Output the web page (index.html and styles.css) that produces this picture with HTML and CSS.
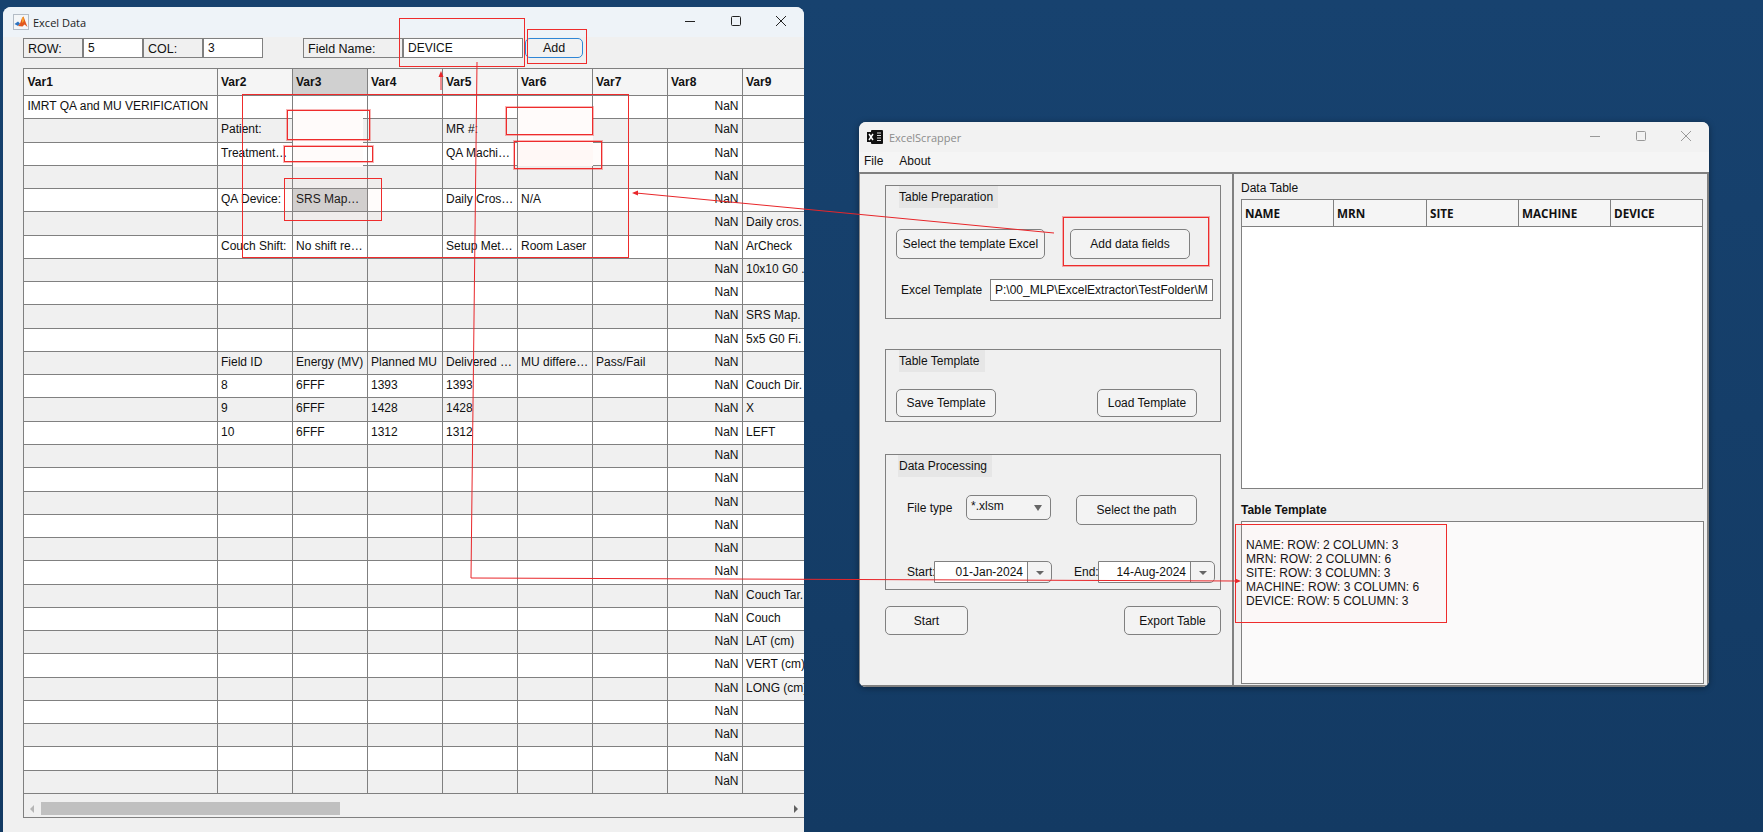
FILE: index.html
```html
<!DOCTYPE html>
<html lang="en">
<head>
<meta charset="UTF-8">
<meta name="viewport" content="width=device-width, initial-scale=1.0">
<title>ExcelScrapper</title>
<link rel="stylesheet" href="styles.css">
</head>
<body>

  <div class="window data-window">
    <div class="titlebar">
      <svg class="app-icon" width="16" height="16" viewBox="0 0 16 16">
        <rect x="0.5" y="0.5" width="15" height="15" fill="#f4f6f8" stroke="#b4bcc6"/>
        <polygon points="1.5,10 5,7.5 7,9.5 5,12" fill="#2f74c0"/>
        <polygon points="5,12 7,9.5 9,4 10.5,2.5 14.5,13 11.5,10.5 9.5,12.5" fill="#e2571e"/>
        <polygon points="9,4 10.5,2.5 11,7 9,9" fill="#f7a12a"/>
      </svg>
      <span class="title-text">Excel Data</span>
      <div class="win-controls">
        <svg width="16" height="16" viewBox="0 0 16 16"><path d="M3 8.5h10" stroke="#222" fill="none"/></svg>
        <svg width="16" height="16" viewBox="0 0 16 16"><rect x="3.5" y="3.5" width="9" height="9" rx="1" stroke="#222" fill="none"/></svg>
        <svg width="16" height="16" viewBox="0 0 16 16"><path d="M3 3l10 10M13 3L3 13" stroke="#222" fill="none"/></svg>
      </div>
    </div>

    <div class="field-bar">
      <div class="field-cell w60">ROW:</div>
      <div class="field-cell w60 value">5</div>
      <div class="field-cell w60">COL:</div>
      <div class="field-cell w60 value">3</div>
      <div class="field-cell w100 push">Field Name:</div>
      <div class="field-cell w120 value">DEVICE</div>
      <button class="add-btn">Add</button>
    </div>

    <div class="sheet">
      <div class="sheet-row head"><div>Var1</div><div>Var2</div><div class="picked">Var3</div><div>Var4</div><div>Var5</div><div>Var6</div><div>Var7</div><div>Var8</div><div>Var9</div></div>
      <div class="sheet-row"><div>IMRT QA and MU VERIFICATION</div><div></div><div></div><div></div><div></div><div></div><div></div><div class="num">NaN</div><div></div></div>
      <div class="sheet-row"><div></div><div>Patient:</div><div></div><div></div><div>MR #:</div><div></div><div></div><div class="num">NaN</div><div></div></div>
      <div class="sheet-row"><div></div><div>Treatment…</div><div></div><div></div><div>QA Machi…</div><div></div><div></div><div class="num">NaN</div><div></div></div>
      <div class="sheet-row"><div></div><div></div><div></div><div></div><div></div><div></div><div></div><div class="num">NaN</div><div></div></div>
      <div class="sheet-row"><div></div><div>QA Device:</div><div class="picked">SRS Map…</div><div></div><div>Daily Cros…</div><div>N/A</div><div></div><div class="num">NaN</div><div></div></div>
      <div class="sheet-row"><div></div><div></div><div></div><div></div><div></div><div></div><div></div><div class="num">NaN</div><div>Daily cros.</div></div>
      <div class="sheet-row"><div></div><div>Couch Shift:</div><div>No shift re…</div><div></div><div>Setup Met…</div><div>Room Laser</div><div></div><div class="num">NaN</div><div>ArCheck</div></div>
      <div class="sheet-row"><div></div><div></div><div></div><div></div><div></div><div></div><div></div><div class="num">NaN</div><div>10x10 G0 .</div></div>
      <div class="sheet-row"><div></div><div></div><div></div><div></div><div></div><div></div><div></div><div class="num">NaN</div><div></div></div>
      <div class="sheet-row"><div></div><div></div><div></div><div></div><div></div><div></div><div></div><div class="num">NaN</div><div>SRS Map.</div></div>
      <div class="sheet-row"><div></div><div></div><div></div><div></div><div></div><div></div><div></div><div class="num">NaN</div><div>5x5 G0 Fi.</div></div>
      <div class="sheet-row"><div></div><div>Field ID</div><div>Energy (MV)</div><div>Planned MU</div><div>Delivered …</div><div>MU differe…</div><div>Pass/Fail</div><div class="num">NaN</div><div></div></div>
      <div class="sheet-row"><div></div><div>8</div><div>6FFF</div><div>1393</div><div>1393</div><div></div><div></div><div class="num">NaN</div><div>Couch Dir.</div></div>
      <div class="sheet-row"><div></div><div>9</div><div>6FFF</div><div>1428</div><div>1428</div><div></div><div></div><div class="num">NaN</div><div>X</div></div>
      <div class="sheet-row"><div></div><div>10</div><div>6FFF</div><div>1312</div><div>1312</div><div></div><div></div><div class="num">NaN</div><div>LEFT</div></div>
      <div class="sheet-row"><div></div><div></div><div></div><div></div><div></div><div></div><div></div><div class="num">NaN</div><div></div></div>
      <div class="sheet-row"><div></div><div></div><div></div><div></div><div></div><div></div><div></div><div class="num">NaN</div><div></div></div>
      <div class="sheet-row"><div></div><div></div><div></div><div></div><div></div><div></div><div></div><div class="num">NaN</div><div></div></div>
      <div class="sheet-row"><div></div><div></div><div></div><div></div><div></div><div></div><div></div><div class="num">NaN</div><div></div></div>
      <div class="sheet-row"><div></div><div></div><div></div><div></div><div></div><div></div><div></div><div class="num">NaN</div><div></div></div>
      <div class="sheet-row"><div></div><div></div><div></div><div></div><div></div><div></div><div></div><div class="num">NaN</div><div></div></div>
      <div class="sheet-row"><div></div><div></div><div></div><div></div><div></div><div></div><div></div><div class="num">NaN</div><div>Couch Tar.</div></div>
      <div class="sheet-row"><div></div><div></div><div></div><div></div><div></div><div></div><div></div><div class="num">NaN</div><div>Couch</div></div>
      <div class="sheet-row"><div></div><div></div><div></div><div></div><div></div><div></div><div></div><div class="num">NaN</div><div>LAT (cm)</div></div>
      <div class="sheet-row"><div></div><div></div><div></div><div></div><div></div><div></div><div></div><div class="num">NaN</div><div>VERT (cm)</div></div>
      <div class="sheet-row"><div></div><div></div><div></div><div></div><div></div><div></div><div></div><div class="num">NaN</div><div>LONG (cm)</div></div>
      <div class="sheet-row"><div></div><div></div><div></div><div></div><div></div><div></div><div></div><div class="num">NaN</div><div></div></div>
      <div class="sheet-row"><div></div><div></div><div></div><div></div><div></div><div></div><div></div><div class="num">NaN</div><div></div></div>
      <div class="sheet-row"><div></div><div></div><div></div><div></div><div></div><div></div><div></div><div class="num">NaN</div><div></div></div>
      <div class="sheet-row"><div></div><div></div><div></div><div></div><div></div><div></div><div></div><div class="num">NaN</div><div></div></div>
      <div class="sheet-scroll">
        <span class="arrow-left"></span>
        <span class="thumb"></span>
        <span class="arrow-right"></span>
      </div>
    </div>
  </div>

  <div class="window scrapper-window">
    <div class="titlebar light">
      <svg class="app-icon" width="16" height="16" viewBox="0 0 16 16">
        <rect x="4" y="1" width="12" height="14" rx="1" fill="#111"/>
        <path d="M10 4h4M10 6.5h4M10 9h4M10 11.5h4" stroke="#ddd" fill="none"/>
        <rect x="0" y="3" width="9" height="10" fill="#111"/>
        <path d="M2 5l4 6M6 5l-4 6" stroke="#fff" stroke-width="1.5" fill="none"/>
      </svg>
      <span class="title-text grey">ExcelScrapper</span>
      <div class="win-controls pale">
        <svg width="16" height="16" viewBox="0 0 16 16"><path d="M3 8.5h10" stroke="#999" fill="none"/></svg>
        <svg width="16" height="16" viewBox="0 0 16 16"><rect x="3.5" y="3.5" width="9" height="9" rx="1" stroke="#999" fill="none"/></svg>
        <svg width="16" height="16" viewBox="0 0 16 16"><path d="M3 3l10 10M13 3L3 13" stroke="#999" fill="none"/></svg>
      </div>
    </div>
    <div class="menubar"><span>File</span><span>About</span></div>

    <div class="panes">
      <div class="left-pane">
        <div class="group group-prep">
          <div class="group-title">Table Preparation</div>
          <div class="group-line top21">
            <button class="btn btn-template">Select the template Excel</button>
            <button class="btn btn-fields">Add data fields</button>
          </div>
          <div class="group-line top20">
            <label class="tpl-label">Excel Template</label>
            <div class="tpl-path">P:\00_MLP\ExcelExtractor\TestFolder\M</div>
          </div>
        </div>

        <div class="group group-tpl">
          <div class="group-title">Table Template</div>
          <div class="group-line top17 spread">
            <button class="btn btn-save">Save Template</button>
            <button class="btn btn-save">Load Template</button>
          </div>
        </div>

        <div class="group group-proc">
          <div class="group-title">Data Processing</div>
          <div class="group-line top18">
            <label class="type-label">File type</label>
            <div class="dropdown">*.xlsm<span class="caret"></span></div>
            <button class="btn btn-path">Select the path</button>
          </div>
          <div class="group-line date-line">
            <label class="start-label">Start:</label>
            <div class="date-box w118"><span class="date-text">01-Jan-2024</span><span class="date-drop"><i class="caret small"></i></span></div>
            <label class="end-label">End:</label>
            <div class="date-box w117"><span class="date-text">14-Aug-2024</span><span class="date-drop"><i class="caret small"></i></span></div>
          </div>
        </div>

        <div class="action-line">
          <button class="btn btn-start">Start</button>
          <button class="btn btn-export">Export Table</button>
        </div>
      </div>

      <div class="right-pane">
        <div class="pane-label">Data Table</div>
        <div class="data-table">
          <div class="data-head">
            <div>NAME</div><div>MRN</div><div>SITE</div><div>MACHINE</div><div>DEVICE</div>
          </div>
        </div>
        <div class="pane-label bold">Table Template</div>
        <div class="template-box">NAME: ROW: 2 COLUMN: 3
MRN: ROW: 2 COLUMN: 6
SITE: ROW: 3 COLUMN: 3
MACHINE: ROW: 3 COLUMN: 6
DEVICE: ROW: 5 COLUMN: 3</div>
      </div>
    </div>
  </div>

  <!-- red markup drawn over the two windows -->
  <div class="mask mask-a"></div>
  <div class="mask mask-b"></div>
  <div class="note note-device"></div>
  <div class="note note-add"></div>
  <div class="note note-big"></div>
  <div class="note note-patient soft"></div>
  <div class="note note-treat soft"></div>
  <div class="note note-srs"></div>
  <div class="note note-mr soft"></div>
  <div class="note note-qa soft"></div>
  <div class="note note-fields soft"></div>
  <div class="note note-template"></div>
  <svg class="arrows" width="1763" height="832" viewBox="0 0 1763 832">
    <path d="M1054 233L636 193" stroke="#e8262a" fill="none"/>
    <polygon points="632,193 638,190.5 638,195.5" fill="#e8262a"/>
    <path d="M441 90V75" stroke="#e8262a" fill="none"/>
    <polygon points="441,71 438.5,77 443.5,77" fill="#e8262a"/>
    <path d="M477 62L471 578L1236 581" stroke="#e8262a" fill="none"/>
    <polygon points="1241,581 1235,578.5 1235,583.5" fill="#e8262a"/>
  </svg>

</body>
</html>
```

FILE: styles.css
```css
* {
  box-sizing: border-box;
}
body {
  margin: 0;
  width: 1763px;
  height: 832px;
  position: relative;
  overflow: hidden;
  background: linear-gradient(#17426f, #133a63);
  font-family: "Liberation Sans", Arial, sans-serif;
  font-size: 12px;
  color: #111;
}
button {
  font-family: inherit;
  font-size: 12px;
  color: #111;
  padding: 0;
}

/* windows */
.window {
  position: absolute;
  background: #f0f0f0;
  overflow: hidden;
  display: flex;
  flex-direction: column;
}
.data-window {
  left: 3px;
  top: 7px;
  width: 801px;
  height: 825px;
  border-radius: 8px 8px 0 0;
}
.scrapper-window {
  left: 859px;
  top: 122px;
  width: 850px;
  height: 565px;
  border-radius: 7px;
  box-shadow: 0 1px 6px rgba(0, 0, 0, 0.4);
}
.titlebar {
  height: 30px;
  flex: none;
  display: flex;
  align-items: center;
  background: #eef3f8;
  padding-left: 10px;
}
.titlebar.light {
  background: #f2f2f2;
  padding-left: 8px;
}
.app-icon {
  flex: none;
}
.title-text {
  font-family: "Open Sans", sans-serif;
  font-size: 11px;
  margin-left: 4px;
  color: #222;
}
.title-text.grey {
  color: #8c8c8c;
  margin-left: 6px;
}
.win-controls {
  margin-left: auto;
  display: flex;
  gap: 29.5px;
  padding-right: 15px;
  margin-top: -2px;
}

/* top fields */
.field-bar {
  display: flex;
  height: 20px;
  margin: 1px 0 0 20px;
}
.field-cell {
  border: 1px solid #808080;
  background: #f0f0f0;
  padding: 3px 4px 0;
  line-height: 14px;
  font-size: 12.5px;
}
.field-cell.value {
  background: #fff;
  padding-top: 2px;
  font-size: 12px;
}
.w60 {
  width: 60px;
}
.w100 {
  width: 100px;
}
.w120 {
  width: 120px;
}
.push {
  margin-left: 40px;
}
.add-btn {
  width: 58px;
  margin-left: 2px;
  border: 1px solid #2f86d6;
  border-radius: 5px;
  background: #f2f2f2;
  font-size: 12.5px;
}

/* sheet */
.sheet {
  margin: 10px 0 0 20px;
  width: 810px;
  height: 750px;
  border: 1px solid #808080;
  border-right: 0;
  position: relative;
  overflow: hidden;
  background: #f0f0f0;
}
.sheet-row {
  display: grid;
  grid-template-columns: 193.5px repeat(8, 75px);
  height: 23.27px;
  background: #fff;
}
.sheet-row:nth-child(odd) {
  background: #f0f0f0;
}
.sheet-row.head {
  height: 27px;
  background: #f5f5f5;
  font-weight: bold;
}
.sheet-row > div {
  border-right: 1px solid #808080;
  border-bottom: 1px solid #808080;
  padding: 0 3px 0 3.5px;
  line-height: 21px;
  white-space: nowrap;
  overflow: hidden;
}
.sheet-row.head > div {
  line-height: 26px;
}
.sheet-row > div.num {
  text-align: right;
}
.sheet-row > div.picked {
  background: #d0d0d0;
}
.sheet-scroll {
  position: absolute;
  left: 0;
  right: 0;
  bottom: 0;
  height: 17px;
  background: #f0f0f0;
}
.thumb {
  position: absolute;
  left: 17px;
  top: 2px;
  width: 299px;
  height: 13px;
  background: #c0c0c0;
}
.arrow-left,
.arrow-right {
  position: absolute;
  top: 5px;
  width: 0;
  height: 0;
  border-top: 4px solid transparent;
  border-bottom: 4px solid transparent;
}
.arrow-left {
  left: 6px;
  border-right: 4px solid #b5b5b5;
}
.arrow-right {
  left: 770px;
  border-left: 4px solid #606060;
}

/* scrapper window */
.menubar {
  height: 22px;
  flex: none;
  background: #f5f5f5;
  border-bottom: 2px solid #808080;
  display: flex;
  gap: 16px;
  padding: 0 0 0 5px;
  line-height: 19px;
}
.panes {
  flex: 1;
  display: flex;
  min-height: 0;
  border-left: 1px solid #8a8a8a;
  border-bottom: 2px solid #808080;
}
.left-pane {
  width: 374px;
  flex: none;
  padding: 11px 0 0 25px;
  border-right: 2px solid #808080;
}
.group {
  width: 336px;
  border: 1px solid #808080;
  padding-left: 10px;
}
.group-prep {
  height: 134px;
}
.group-tpl {
  height: 73px;
  margin-top: 30px;
}
.group-proc {
  height: 136px;
  margin-top: 32px;
  padding-left: 0;
}
.group-title {
  display: inline-block;
  vertical-align: top;
  background: #e6e6e6;
  height: 22px;
  line-height: 22px;
  margin-left: 3px;
  padding: 0 5px 0 0;
}
.group-proc .group-title {
  margin-left: 12px;
  padding: 0 5px 0 1px;
}
.group-line {
  display: flex;
  align-items: flex-start;
}
.top21 {
  margin-top: 21px;
}
.top20 {
  margin-top: 20px;
}
.top18 {
  margin-top: 18px;
}
.top17 {
  margin-top: 17px;
}
.spread {
  width: 301px;
  justify-content: space-between;
}
.btn {
  height: 30px;
  border: 1px solid #808080;
  border-radius: 5px;
  background: #f3f3f3;
}
.btn-template {
  width: 149px;
}
.btn-fields {
  width: 120px;
  margin-left: 25px;
}
.tpl-label {
  margin-left: 5px;
  width: 89px;
  line-height: 22px;
}
.tpl-path {
  width: 223px;
  height: 22px;
  line-height: 20px;
  border: 1px solid #808080;
  background: #fff;
  padding-left: 4px;
  white-space: nowrap;
  overflow: hidden;
}
.btn-save {
  width: 100px;
  height: 28px;
}
.type-label {
  margin-left: 21px;
  width: 59px;
  line-height: 26px;
}
.dropdown {
  width: 85px;
  height: 25px;
  border: 1px solid #808080;
  border-radius: 5px;
  background: #f3f3f3;
  padding-left: 4px;
  line-height: 21px;
  position: relative;
}
.caret {
  position: absolute;
  right: 8px;
  top: 9px;
  width: 0;
  height: 0;
  border-left: 4px solid transparent;
  border-right: 4px solid transparent;
  border-top: 6px solid #666;
}
.caret.small {
  left: 8px;
  right: auto;
  top: 9px;
  border-top-width: 4px;
}
.btn-path {
  width: 121px;
  margin-left: 25px;
}
.date-line {
  margin-top: 36px;
}
.start-label {
  margin-left: 21px;
  width: 27px;
  line-height: 22px;
  white-space: nowrap;
}
.end-label {
  margin-left: 22px;
  width: 24px;
  line-height: 22px;
  white-space: nowrap;
}
.date-box {
  height: 22px;
  border: 1px solid #808080;
  border-radius: 0 5px 5px 0;
  background: #f3f3f3;
  display: flex;
  line-height: 20px;
  position: relative;
}
.w118 {
  width: 118px;
}
.w117 {
  width: 117px;
}
.date-text {
  flex: 1;
  background: #fff;
  text-align: right;
  padding-right: 4px;
}
.date-drop {
  width: 24px;
  flex: none;
  border-left: 1px solid #808080;
  position: relative;
}
.action-line {
  display: flex;
  justify-content: space-between;
  width: 336px;
  margin-top: 16px;
}
.btn-start {
  width: 83px;
  height: 29px;
}
.btn-export {
  width: 97px;
  height: 29px;
}

.right-pane {
  flex: 1;
  padding: 0 0 0 7px;
  border-right: 2px solid #808080;
  min-width: 0;
  display: flex;
  flex-direction: column;
}
.pane-label {
  flex: none;
  height: 25px;
  line-height: 28px;
}
.pane-label.bold {
  margin-top: 15px;
  height: 12px;
  line-height: 12px;
  font-weight: bold;
}
.data-table {
  flex: none;
  width: 462px;
  height: 290px;
  border: 1px solid #808080;
  background: #fff;
}
.data-head {
  display: grid;
  grid-template-columns: 92px 93px 92px 92px 1fr;
  height: 27px;
  background: #f5f5f5;
  border-bottom: 1px solid #808080;
  font-family: "Open Sans", sans-serif;
  font-weight: 700;
  font-size: 11.7px;
  line-height: 26px;
}
.data-head > div {
  padding-left: 3px;
  border-right: 1px solid #808080;
}
.data-head > div:last-child {
  border-right: 0;
}
.template-box {
  flex: none;
  width: 463px;
  height: 163px;
  margin-top: 5px;
  border: 1px solid #808080;
  background: #fbfafa;
  padding: 16px 0 0 4px;
  line-height: 14px;
  white-space: pre;
}

/* markup overlay */
.mask {
  position: absolute;
  background: #fffbfa;
}
.mask-a {
  left: 293px;
  top: 110px;
  width: 70px;
  height: 57px;
}
.mask-b {
  left: 518px;
  top: 107px;
  width: 75px;
  height: 59px;
}
.note {
  position: absolute;
  border: 1px solid #ee2c2c;
}
.note.soft {
  box-shadow: 0 0 0 1px rgba(238, 44, 44, 0.35);
}
.note-device {
  left: 399px;
  top: 18px;
  width: 126px;
  height: 49px;
}
.note-add {
  left: 527px;
  top: 29px;
  width: 60px;
  height: 35px;
}
.note-big {
  left: 242px;
  top: 94px;
  width: 387px;
  height: 164px;
}
.note-patient {
  left: 287px;
  top: 110px;
  width: 83px;
  height: 30px;
}
.note-treat {
  left: 284px;
  top: 146px;
  width: 89px;
  height: 16px;
}
.note-srs {
  left: 284px;
  top: 178px;
  width: 98px;
  height: 43px;
  background: rgba(255, 190, 170, 0.05);
}
.note-mr {
  left: 506px;
  top: 107px;
  width: 87px;
  height: 28px;
}
.note-qa {
  left: 514px;
  top: 141px;
  width: 88px;
  height: 28px;
  background: rgba(255, 190, 170, 0.05);
}
.note-fields {
  left: 1063px;
  top: 217px;
  width: 146px;
  height: 49px;
}
.note-template {
  left: 1235px;
  top: 524px;
  width: 212px;
  height: 99px;
  background: rgba(255, 170, 170, 0.03);
}
.arrows {
  position: absolute;
  left: 0;
  top: 0;
  pointer-events: none;
}
```
